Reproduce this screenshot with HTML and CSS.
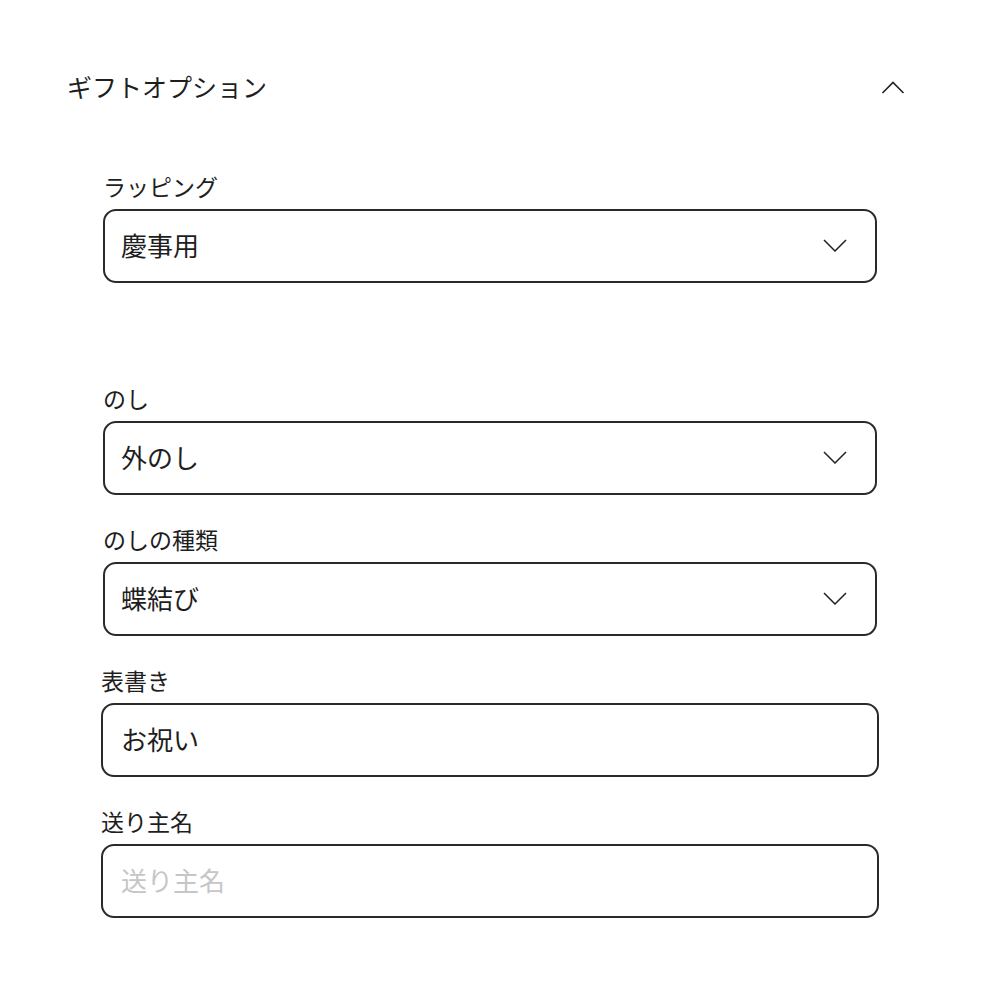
FILE: index.html
```html
<!DOCTYPE html>
<html lang="ja">
<head>
<meta charset="utf-8">
<link rel="stylesheet" href="styles.css">
</head>
<body>
<div class="page">
  <header class="head">
    <h2 class="title">ギフトオプション</h2>
    <svg class="chev-up" width="24" height="13" viewBox="0 0 24 13"><polyline points="1.5,12 12,1.5 22.5,12" fill="none" stroke="#222" stroke-width="1.6"/></svg>
  </header>
  <div class="body">
    <div class="group group-wrap">
      <div class="field field-select">
        <label class="label">ラッピング</label>
        <div class="control select">
          <span class="value">慶事用</span>
          <svg class="chev" width="24" height="13" viewBox="0 0 24 13"><polyline points="1,1 12,12 23,1" fill="none" stroke="#222" stroke-width="1.5"/></svg>
        </div>
      </div>
    </div>
    <div class="group">
      <div class="field field-select">
        <label class="label">のし</label>
        <div class="control select">
          <span class="value">外のし</span>
          <svg class="chev" width="24" height="13" viewBox="0 0 24 13"><polyline points="1,1 12,12 23,1" fill="none" stroke="#222" stroke-width="1.5"/></svg>
        </div>
      </div>
      <div class="field field-select">
        <label class="label">のしの種類</label>
        <div class="control select">
          <span class="value">蝶結び</span>
          <svg class="chev" width="24" height="13" viewBox="0 0 24 13"><polyline points="1,1 12,12 23,1" fill="none" stroke="#222" stroke-width="1.5"/></svg>
        </div>
      </div>
      <div class="field">
        <label class="label">表書き</label>
        <div class="control input">
          <span class="value">お祝い</span>
        </div>
      </div>
      <div class="field">
        <label class="label">送り主名</label>
        <div class="control input">
          <span class="value placeholder">送り主名</span>
        </div>
      </div>
    </div>
  </div>
</div>
</body>
</html>
```
FILE: styles.css
```css
html, body {
  margin: 0;
  padding: 0;
  background: #fff;
}
body {
  font-family: "Noto Sans CJK JP", "Noto Sans", sans-serif;
  color: #1e1e1e;
}
.page {
  padding: 68px 95px 0 67px;
}
.head {
  display: flex;
  align-items: center;
  justify-content: space-between;
  height: 36px;
}
.title {
  margin: 0;
  font-size: 25px;
  font-weight: 400;
  line-height: 36px;
}
.chev-up {
  display: block;
  margin-top: 2px;
}
.body {
  padding: 68px 26px 0 34px;
}
.group {
  display: flex;
  flex-direction: column;
  gap: 30px;
}
.group-wrap {
  margin-bottom: 101px;
}
.field {
  display: flex;
  flex-direction: column;
}
.field-select {
  padding: 0 2px;
}
.label {
  font-size: 23px;
  line-height: 28px;
  margin-bottom: 9px;
}
.control {
  box-sizing: border-box;
  height: 74px;
  border: 2px solid #2a2a2a;
  border-radius: 13px;
  display: flex;
  align-items: center;
  justify-content: space-between;
}
.select {
  padding: 0 28px 2px 16px;
}
.input {
  padding: 0 18px 2px;
}
.value {
  font-size: 26px;
  line-height: 36px;
}
.placeholder {
  color: #c6c6c6;
}
.chev {
  display: block;
  margin-top: 1px;
}
```
